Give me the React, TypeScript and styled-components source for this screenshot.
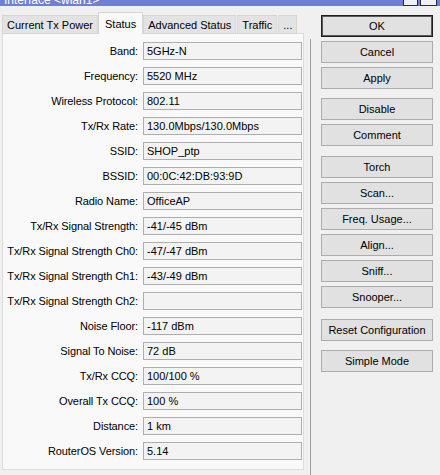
import { FC, Fragment } from 'react';
import styled, { createGlobalStyle } from 'styled-components';

const GlobalStyle = createGlobalStyle`
    html, body {
        margin: 0;
        padding: 0;
        background: #f0f0f0;
    }
    body {
        font-family: "Liberation Sans", Arial, sans-serif;
        font-size: 11px;
        color: #000;
    }
`;

const Window = styled.div`
    width: 440px;
    height: 475px;
    overflow: hidden;
    background: #f0f0f0;
    display: flex;
    flex-direction: column;
`;

const TitleBar = styled.div`
    height: 6px;
    flex: none;
    background: #6f7fd9;
    display: flex;
    align-items: flex-end;
    justify-content: space-between;
    overflow: hidden;
    padding: 0 3px 0 4px;
`;

const TitleText = styled.span`
    color: #fff;
    font-size: 12px;
    line-height: 12px;
    white-space: nowrap;
`;

const Controls = styled.div`
    display: flex;
    gap: 2px;
    align-self: stretch;
`;

const ControlBox = styled.div<{ $w: number }>`
    width: ${p => p.$w}px;
    height: 5px;
    border: 1px solid #2a2a3a;
    border-top: none;
    background: #eef0f8;
`;

const Body = styled.div`
    flex: 1;
    display: flex;
    align-items: flex-start;
    padding: 6px 0 0 2px;
`;

const LeftSide = styled.div`
    width: 302px;
    display: flex;
    flex-direction: column;
`;

const TabStrip = styled.div`
    display: flex;
    align-items: flex-end;
    height: 22px;
    position: relative;
    z-index: 1;
    margin-bottom: -1px;
`;

const Tab = styled.div<{ $active?: boolean }>`
    height: ${p => (p.$active ? 22 : 19)}px;
    box-sizing: border-box;
    padding: 0 ${p => (p.$active ? 6 : 4)}px;
    margin: 0 ${p => (p.$active ? -1 : 0)}px;
    display: flex;
    align-items: center;
    font-size: 11px;
    white-space: nowrap;
    background: ${p => (p.$active ? '#f9f9f9' : '#e3e3e3')};
    border: 1px solid #d6d6d6;
    border-bottom: ${p => (p.$active ? 'none' : '1px solid #d6d6d6')};
    margin-right: ${p => (p.$active ? 0 : 1)}px;
    position: relative;
    z-index: ${p => (p.$active ? 2 : 1)};
`;

const Panel = styled.div`
    height: 437px;
    box-sizing: border-box;
    background: #f9f9f9;
    border: 1px solid #dcdcdc;
    padding: 8px 0 0 0;
    display: grid;
    grid-template-columns: 135px 159px;
    grid-auto-rows: 18px;
    column-gap: 5px;
    row-gap: 7px;
`;

const Label = styled.div`
    text-align: right;
    line-height: 18px;
    white-space: nowrap;
    letter-spacing: -0.1px;
`;

const Field = styled.div`
    box-sizing: border-box;
    height: 18px;
    border: 1px solid #aeaeae;
    background: #f3f3f3;
    padding: 0 3px;
    line-height: 16px;
    white-space: nowrap;
    overflow: hidden;
`;

const Divider = styled.div`
    width: 1px;
    align-self: stretch;
    margin: 27px 0 0 6px;
    background: #a0a0a0;
`;

const ButtonColumn = styled.div`
    display: flex;
    flex-direction: column;
    gap: 4px;
    margin: 3px 0 0 10px;
    width: 112px;
`;

const Button = styled.div<{ $gapBefore?: number; $primary?: boolean }>`
    height: 22px;
    box-sizing: border-box;
    margin-top: ${p => p.$gapBefore ?? 0}px;
    border: 1px solid ${p => (p.$primary ? '#1f1f1f' : '#acacac')};
    box-shadow: ${p => (p.$primary ? 'inset 0 0 0 1px #5a5a5a' : 'none')};
    background: #e1e1e1;
    display: flex;
    align-items: center;
    justify-content: center;
    font-size: 11px;
    white-space: nowrap;
`;

const rows: [string, string][] = [
    ['Band:', '5GHz-N'],
    ['Frequency:', '5520 MHz'],
    ['Wireless Protocol:', '802.11'],
    ['Tx/Rx Rate:', '130.0Mbps/130.0Mbps'],
    ['SSID:', 'SHOP_ptp'],
    ['BSSID:', '00:0C:42:DB:93:9D'],
    ['Radio Name:', 'OfficeAP'],
    ['Tx/Rx Signal Strength:', '-41/-45 dBm'],
    ['Tx/Rx Signal Strength Ch0:', '-47/-47 dBm'],
    ['Tx/Rx Signal Strength Ch1:', '-43/-49 dBm'],
    ['Tx/Rx Signal Strength Ch2:', ''],
    ['Noise Floor:', '-117 dBm'],
    ['Signal To Noise:', '72 dB'],
    ['Tx/Rx CCQ:', '100/100 %'],
    ['Overall Tx CCQ:', '100 %'],
    ['Distance:', '1 km'],
    ['RouterOS Version:', '5.14'],
];

const buttons: { label: string; gap?: number; primary?: boolean }[] = [
    { label: 'OK', primary: true },
    { label: 'Cancel' },
    { label: 'Apply' },
    { label: 'Disable', gap: 5 },
    { label: 'Comment' },
    { label: 'Torch', gap: 6 },
    { label: 'Scan...' },
    { label: 'Freq. Usage...' },
    { label: 'Align...' },
    { label: 'Sniff...' },
    { label: 'Snooper...' },
    { label: 'Reset Configuration', gap: 7 },
    { label: 'Simple Mode', gap: 5 },
];

const tabs = ['Current Tx Power', 'Status', 'Advanced Status', 'Traffic', '...'];

const App: FC = () => {
    return (
        <Window>
            <GlobalStyle />
            <TitleBar>
                <TitleText>Interface &lt;wlan1&gt;</TitleText>
                <Controls>
                    <ControlBox $w={13} />
                    <ControlBox $w={15} />
                </Controls>
            </TitleBar>
            <Body>
                <LeftSide>
                    <TabStrip>
                        {tabs.map(t => (
                            <Tab key={t} $active={t === 'Status'}>{t}</Tab>
                        ))}
                    </TabStrip>
                    <Panel>
                        {rows.map(([label, value]) => (
                            <Fragment key={label}>
                                <Label>{label}</Label>
                                <Field>{value}</Field>
                            </Fragment>
                        ))}
                    </Panel>
                </LeftSide>
                <Divider />
                <ButtonColumn>
                    {buttons.map(b => (
                        <Button key={b.label} $gapBefore={b.gap} $primary={b.primary}>
                            {b.label}
                        </Button>
                    ))}
                </ButtonColumn>
            </Body>
        </Window>
    );
};

export default App;
